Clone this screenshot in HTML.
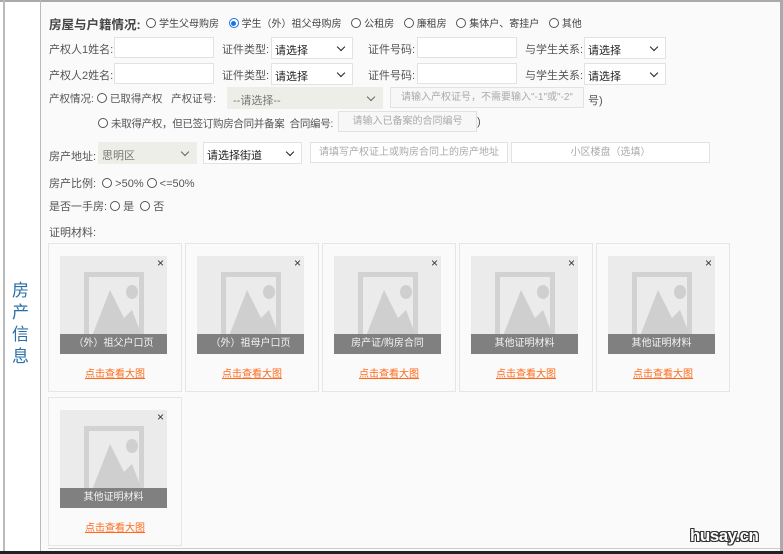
<!DOCTYPE html>
<html><head><meta charset="utf-8"><style>
*{box-sizing:border-box;margin:0;padding:0}
body{width:783px;height:554px;overflow:hidden;background:#fff;font-family:"Liberation Sans","Noto Sans CJK SC",sans-serif;font-size:11px;color:#555;position:relative}
.a{position:absolute;white-space:nowrap}
.in{position:absolute;background:#fff;border:1px solid #e2e2e2;height:21px}
.sel{position:absolute;background:#fff;border:1px solid #e2e2e2;height:22px;color:#222;font-size:11px;padding:4px 3px}
.sel::after{content:"";position:absolute;right:8px;top:6px;width:5px;height:5px;border-right:1.6px solid #222;border-bottom:1.6px solid #222;transform:rotate(45deg)}
.dis{background:#eeeee8;color:#777}
.dis::after{border-color:#666}
.ph{position:absolute;background:#f7f7f7;border:1px solid #e2e2e2;height:21px;color:#aaa;font-size:10px;text-align:center;line-height:19px}
.r{display:inline-block;width:10px;height:10px;border:1px solid #555;border-radius:50%;vertical-align:-1px;margin-right:3px;background:#fff}
.rc{border-color:#1a73e8;position:relative}
.rc::after{content:"";position:absolute;left:1.5px;top:1.5px;width:5px;height:5px;border-radius:50%;background:#1a73e8}
.card{position:absolute;width:134px;height:149px;border:1px solid #e6e6e6;background:#fafafa}
.img{position:absolute;left:11px;top:12px;width:107px;height:98px;background:#ebebeb;overflow:hidden}
.img .fr{position:absolute;left:24px;top:16px;width:60px;height:70px;border:5px solid #d2d2d2}
.img svg{position:absolute;left:0;top:0}
.cap{position:absolute;left:0;bottom:0;width:107px;height:20px;background:#808080;color:#f4f4f4;font-size:10px;text-align:center;line-height:20px}
.x{position:absolute;right:3px;top:0;font-size:12px;color:#333}
.lk{position:absolute;left:0;width:132px;top:121px;text-align:center;color:#ff6a1a;text-decoration:underline;font-size:10px}
</style></head><body>
<div class="a" style="left:0;top:0;width:783px;height:2px;background:#aaa"></div>
<div class="a" style="left:3px;top:0;width:2px;height:554px;background:#bbb"></div>
<div class="a" style="left:780px;top:0;width:3px;height:554px;background:#aaa"></div>
<div class="a" style="left:40px;top:0;width:1px;height:554px;background:#bbb"></div>
<div class="a" style="left:41px;top:2px;width:739px;height:550px;background:#fafafa"></div>
<div class="a" style="left:0;top:551px;width:783px;height:3px;background:#222"></div>
<div class="a" style="left:48px;top:548px;width:732px;height:1px;background:#ccc"></div>
<div class="a" style="left:12px;top:280px;width:20px;font-size:17px;line-height:22px;color:#2a6fa8;white-space:normal">房产信息</div>

<div class="a" style="left:49px;top:14px;font-size:12.5px;font-weight:bold;color:#444">房屋与户籍情况:</div>
<div class="a" style="left:146px;top:15px;font-size:10px;color:#444;word-spacing:2px"><span class="r"></span>学生父母购房 &nbsp;<span class="r rc"></span>学生（外）祖父母购房 &nbsp;<span class="r"></span>公租房 &nbsp;<span class="r"></span>廉租房 &nbsp;<span class="r"></span>集体户、寄挂户 &nbsp;<span class="r"></span>其他</div>

<div class="a" style="left:49px;top:41px">产权人1姓名:</div>
<div class="in" style="left:114px;top:37px;width:100px"></div>
<div class="a" style="left:222px;top:41px">证件类型:</div>
<div class="sel" style="left:271px;top:37px;width:82px">请选择</div>
<div class="a" style="left:368px;top:41px">证件号码:</div>
<div class="in" style="left:417px;top:37px;width:100px"></div>
<div class="a" style="left:525px;top:41px">与学生关系:</div>
<div class="sel" style="left:584px;top:37px;width:82px">请选择</div>

<div class="a" style="left:49px;top:67px">产权人2姓名:</div>
<div class="in" style="left:114px;top:63px;width:100px"></div>
<div class="a" style="left:222px;top:67px">证件类型:</div>
<div class="sel" style="left:271px;top:63px;width:82px">请选择</div>
<div class="a" style="left:368px;top:67px">证件号码:</div>
<div class="in" style="left:417px;top:63px;width:100px"></div>
<div class="a" style="left:525px;top:67px">与学生关系:</div>
<div class="sel" style="left:584px;top:63px;width:82px">请选择</div>

<div class="a" style="left:49px;top:91px;font-size:10.5px">产权情况: <span class="r"></span>已取得产权 &nbsp; 产权证号:</div>
<div class="sel dis" style="left:227px;top:87px;width:156px;border-color:#eeeee8;padding-left:5px">--请选择--</div>
<div class="ph" style="left:390px;top:87px;width:194px">请输入产权证号，不需要输入"-1"或"-2"</div>
<div class="a" style="left:588px;top:92px">号)</div>

<div class="a" style="left:98px;top:116px;font-size:10.5px;letter-spacing:-0.3px"><span class="r"></span>未取得产权，但已签订购房合同并备案 &nbsp;合同编号:</div>
<div class="ph" style="left:338px;top:111px;width:139px">请输入已备案的合同编号</div>
<div class="a" style="left:477px;top:116px">)</div>

<div class="a" style="left:49px;top:148px">房产地址:</div>
<div class="sel dis" style="left:98px;top:142px;width:99px;border-color:#eeeee8;padding-left:3px">思明区</div>
<div class="sel" style="left:203px;top:142px;width:99px">请选择街道</div>
<div class="ph" style="left:310px;top:142px;width:198px;background:#fff">请填写产权证上或购房合同上的房产地址</div>
<div class="ph" style="left:511px;top:142px;width:199px;background:#fff">小区楼盘（选填）</div>

<div class="a" style="left:49px;top:175px">房产比例: &nbsp;<span class="r"></span>&gt;50% <span class="r"></span>&lt;=50%</div>
<div class="a" style="left:49px;top:198px">是否一手房: <span class="r"></span>是 &nbsp;<span class="r"></span>否</div>
<div class="a" style="left:49px;top:224px">证明材料:</div>

<div class="card" style="left:48px;top:243px"><div class="img"><div class="fr"></div><svg width="107" height="98"><polygon points="32,80 50,34 64,62 72,54 82,80" fill="#cfcfcf"/><ellipse cx="72" cy="36" rx="6" ry="7" fill="#cfcfcf"/></svg><div class="cap">（外）祖父户口页</div><div class="x">×</div></div><div class="lk">点击查看大图</div></div>
<div class="card" style="left:185px;top:243px"><div class="img"><div class="fr"></div><svg width="107" height="98"><polygon points="32,80 50,34 64,62 72,54 82,80" fill="#cfcfcf"/><ellipse cx="72" cy="36" rx="6" ry="7" fill="#cfcfcf"/></svg><div class="cap">（外）祖母户口页</div><div class="x">×</div></div><div class="lk">点击查看大图</div></div>
<div class="card" style="left:322px;top:243px"><div class="img"><div class="fr"></div><svg width="107" height="98"><polygon points="32,80 50,34 64,62 72,54 82,80" fill="#cfcfcf"/><ellipse cx="72" cy="36" rx="6" ry="7" fill="#cfcfcf"/></svg><div class="cap">房产证/购房合同</div><div class="x">×</div></div><div class="lk">点击查看大图</div></div>
<div class="card" style="left:459px;top:243px"><div class="img"><div class="fr"></div><svg width="107" height="98"><polygon points="32,80 50,34 64,62 72,54 82,80" fill="#cfcfcf"/><ellipse cx="72" cy="36" rx="6" ry="7" fill="#cfcfcf"/></svg><div class="cap">其他证明材料</div><div class="x">×</div></div><div class="lk">点击查看大图</div></div>
<div class="card" style="left:596px;top:243px"><div class="img"><div class="fr"></div><svg width="107" height="98"><polygon points="32,80 50,34 64,62 72,54 82,80" fill="#cfcfcf"/><ellipse cx="72" cy="36" rx="6" ry="7" fill="#cfcfcf"/></svg><div class="cap">其他证明材料</div><div class="x">×</div></div><div class="lk">点击查看大图</div></div>
<div class="card" style="left:48px;top:397px"><div class="img"><div class="fr"></div><svg width="107" height="98"><polygon points="32,80 50,34 64,62 72,54 82,80" fill="#cfcfcf"/><ellipse cx="72" cy="36" rx="6" ry="7" fill="#cfcfcf"/></svg><div class="cap">其他证明材料</div><div class="x">×</div></div><div class="lk">点击查看大图</div></div>

<div class="a" style="left:690px;top:526px;font-size:17px;font-weight:bold;color:#fff;letter-spacing:-0.5px;text-shadow:1px 0 0 #333,-1px 0 0 #333,0 1px 0 #333,0 -1px 0 #333,1px 1px 0 #333,-1px -1px 0 #333,1px -1px 0 #333,-1px 1px 0 #333">husay.cn</div>
</body></html>
